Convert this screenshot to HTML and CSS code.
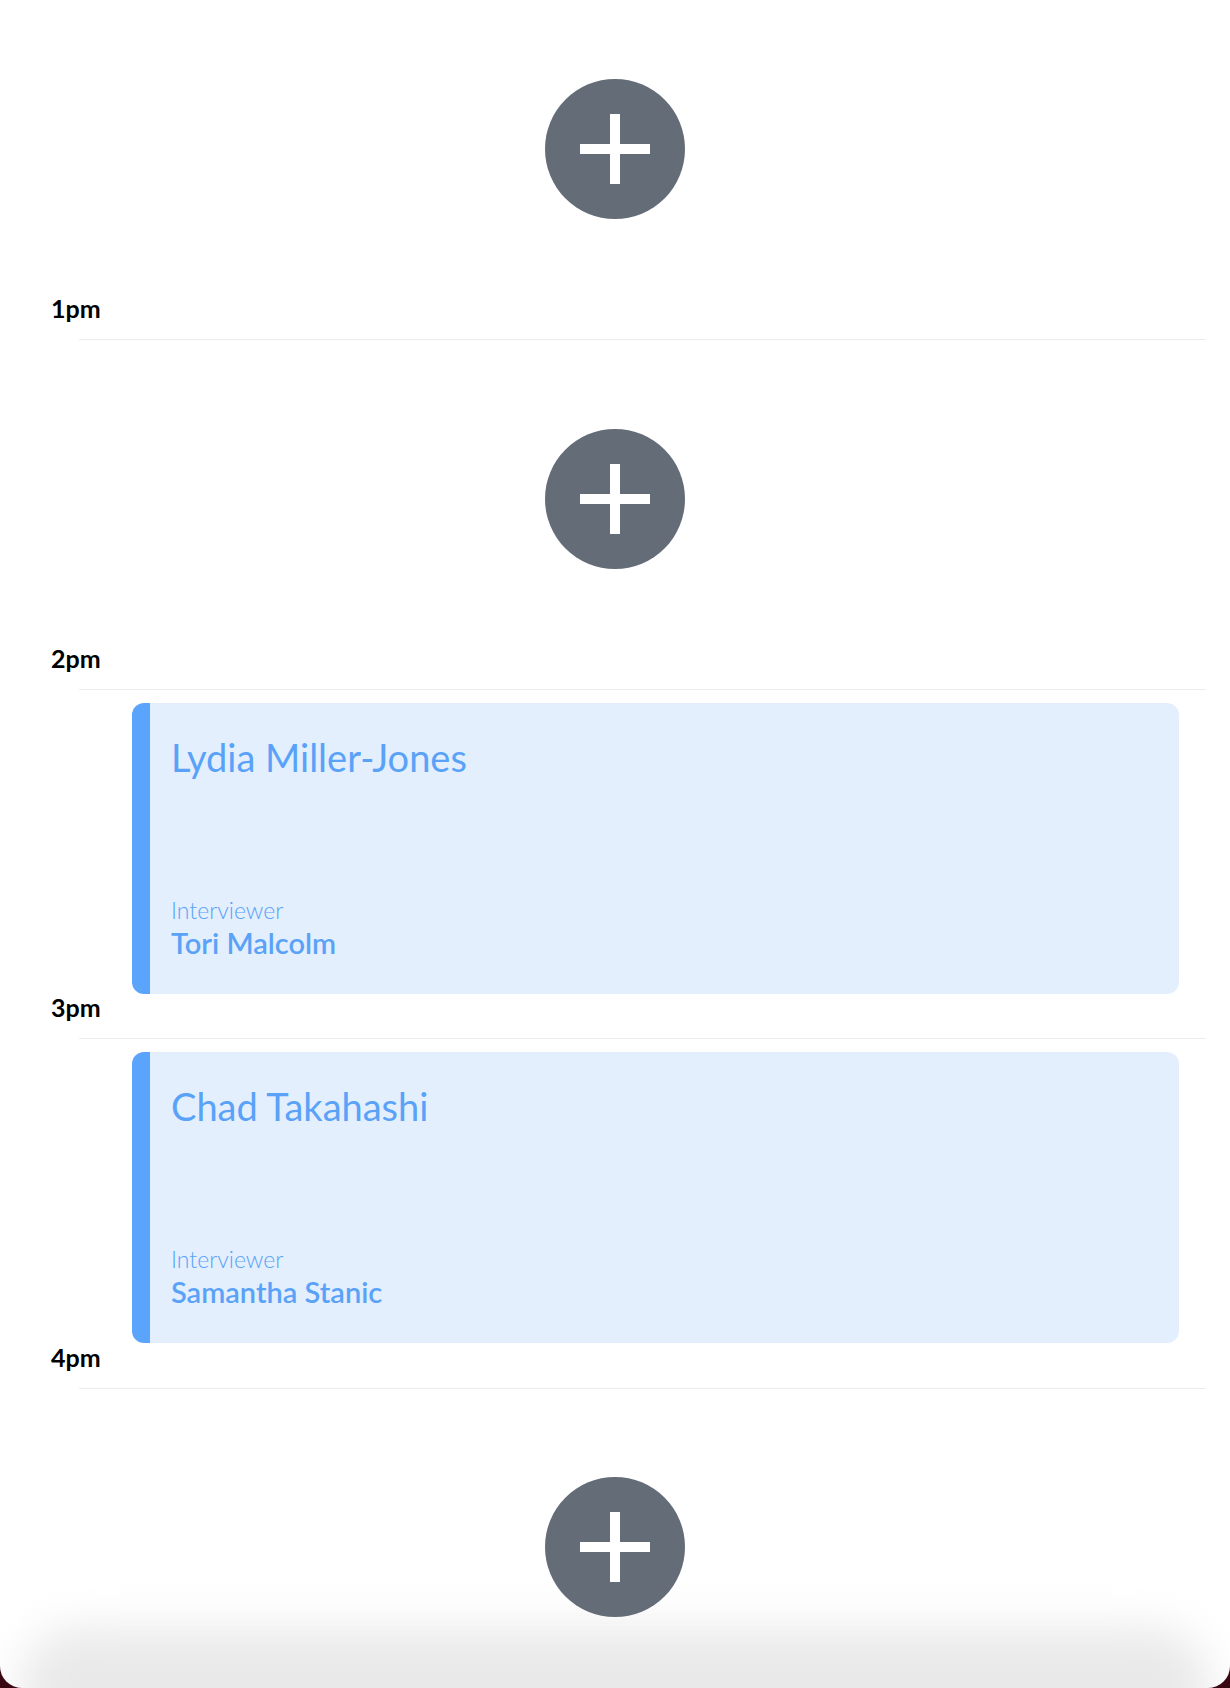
FILE: index.html
```html
<!DOCTYPE html>
<html lang="en">
<head>
<meta charset="utf-8">
<title>Schedule</title>
<link rel="stylesheet" href="styles.css">
</head>
<body>
<div class="screen">
  <div class="bottom-fade"></div>
  <div class="timeline">
    <section class="hour">
      <div class="slot">
        <button class="add" aria-label="Add interview">
          <svg viewBox="0 0 140 140" width="140" height="140"><circle cx="70" cy="70" r="70" fill="#646c78"/><rect x="35" y="65" width="70" height="10" fill="#fff"/><rect x="65" y="35" width="10" height="70" fill="#fff"/></svg>
        </button>
      </div>
      <div class="time">1pm</div>
      <div class="rule"></div>
    </section>
    <section class="hour">
      <div class="slot">
        <button class="add" aria-label="Add interview">
          <svg viewBox="0 0 140 140" width="140" height="140"><circle cx="70" cy="70" r="70" fill="#646c78"/><rect x="35" y="65" width="70" height="10" fill="#fff"/><rect x="65" y="35" width="10" height="70" fill="#fff"/></svg>
        </button>
      </div>
      <div class="time">2pm</div>
      <div class="rule"></div>
    </section>
    <section class="hour">
      <div class="slot slot-card">
        <article class="card">
          <h2 class="candidate">Lydia Miller-Jones</h2>
          <div class="meta">
            <div class="meta-label">Interviewer</div>
            <div class="meta-name">Tori Malcolm</div>
          </div>
        </article>
      </div>
      <div class="time">3pm</div>
      <div class="rule"></div>
    </section>
    <section class="hour">
      <div class="slot slot-card">
        <article class="card">
          <h2 class="candidate">Chad Takahashi</h2>
          <div class="meta">
            <div class="meta-label">Interviewer</div>
            <div class="meta-name">Samantha Stanic</div>
          </div>
        </article>
      </div>
      <div class="time">4pm</div>
      <div class="rule"></div>
    </section>
    <section class="hour">
      <div class="slot">
        <button class="add" aria-label="Add interview">
          <svg viewBox="0 0 140 140" width="140" height="140"><circle cx="70" cy="70" r="70" fill="#646c78"/><rect x="35" y="65" width="70" height="10" fill="#fff"/><rect x="65" y="35" width="10" height="70" fill="#fff"/></svg>
        </button>
      </div>
    </section>
  </div>
</div>
</body>
</html>
```

FILE: styles.css
```css
html, body {
  margin: 0;
  padding: 0;
}

body {
  background: #3a0812;
  font-family: "Lato", "Liberation Sans", sans-serif;
}

.screen {
  position: relative;
  width: 1230px;
  height: 1688px;
  background: #ffffff;
  border-radius: 0 0 22px 22px;
  overflow: hidden;
}

.timeline {
  position: relative;
  z-index: 1;
  display: flex;
  flex-direction: column;
  margin-top: -9.5px;
}

.hour {
  height: 349.5px;
  display: flex;
  flex-direction: column;
  flex: none;
}

.slot {
  margin-top: 13px;
  height: 291px;
  display: flex;
  align-items: center;
  justify-content: center;
  flex: none;
}

.slot-card {
  justify-content: stretch;
  padding: 0 51px 0 132px;
}

.add {
  width: 140px;
  height: 140px;
  border: 0;
  padding: 0;
  margin: 0;
  background: none;
  display: block;
  cursor: pointer;
}

.add svg {
  display: block;
}

.time {
  margin-top: auto;
  margin-bottom: 18px;
  padding-left: 51px;
  font-size: 25px;
  line-height: 1;
  font-weight: 700;
  color: #000;
}

.rule {
  height: 1px;
  background: #ececec;
  margin: 0 24px 0 79px;
  flex: none;
}

.card {
  flex: 1;
  height: 100%;
  box-sizing: border-box;
  background: #e3effd;
  border-left: 18px solid #5aa4fb;
  border-radius: 12px;
  padding: 35px 20px 37px 21px;
  display: flex;
  flex-direction: column;
  justify-content: space-between;
  color: #5aa2f8;
}

.candidate {
  margin: 0;
  font-size: 38px;
  line-height: 1;
  font-weight: 400;
}

.meta-label {
  font-size: 23px;
  line-height: 1;
  font-weight: 300;
  margin-bottom: 6px;
}

.meta-name {
  font-size: 29px;
  line-height: 1;
  font-weight: 600;
}

.bottom-fade {
  position: absolute;
  z-index: 0;
  left: 20px;
  right: 20px;
  bottom: -70px;
  height: 130px;
  background: #e9e9e9;
  border-radius: 60px;
  filter: blur(22px);
  pointer-events: none;
}
```
